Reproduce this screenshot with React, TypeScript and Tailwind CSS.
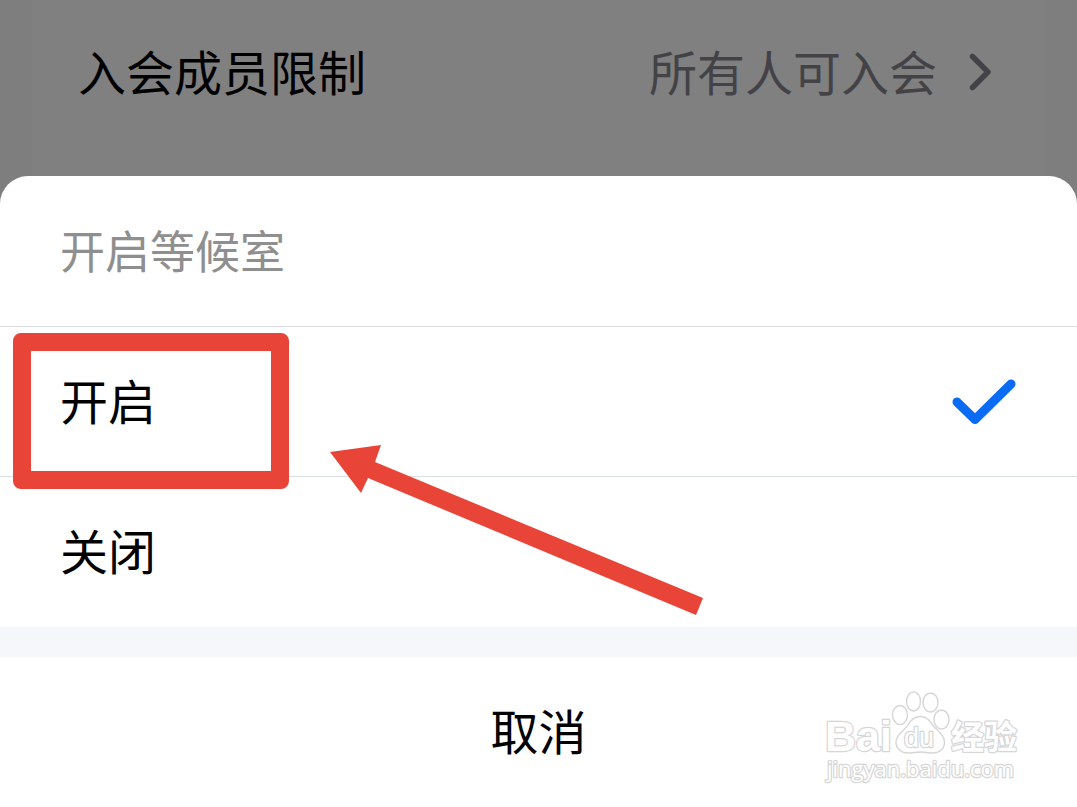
import { useState } from "react";

const OPTIONS = [
  { value: "on", label: "开启" },
  { value: "off", label: "关闭" },
];

function ChevronIcon() {
  return (
    <svg viewBox="0 0 24 38" className="h-[38px] w-6 flex-shrink-0" fill="none" aria-hidden="true">
      <path d="M3.5 3.5 19 19 3.5 34.500" stroke="#434347" strokeWidth="5.500" strokeLinecap="round" strokeLinejoin="round" />
    </svg>
  );
}

function CheckIcon() {
  return (
    <svg viewBox="0 0 66 48" className="h-12 w-[66px] flex-shrink-0 invisible peer-checked:visible" fill="none" aria-hidden="true">
      <path d="M6 24 24 41.500 60 6" stroke="#0a6cf5" strokeWidth="9" strokeLinecap="round" strokeLinejoin="round" />
    </svg>
  );
}

function Watermark() {
  return (
    <svg
      viewBox="0 0 205 100"
      className="pointer-events-none absolute right-[52px] bottom-[17px] h-[100px] w-[205px]"
      fill="#ffffff"
      stroke="#d6d6d6"
      strokeWidth="1.4"
      strokeLinejoin="round"
      role="img"
      aria-label="Baidu 经验"
    >
      <text x="5" y="61" fontSize="43" fontWeight="700" strokeWidth="2.500" paintOrder="stroke" className="font-['Liberation_Sans',sans-serif]">Bai</text>
      <ellipse cx="80" cy="25" rx="7.500" ry="9.500" />
      <ellipse cx="93.500" cy="11.500" rx="7" ry="9.500" />
      <ellipse cx="110.500" cy="12.500" rx="7.500" ry="9.500" />
      <ellipse cx="121.500" cy="29.500" rx="7.500" ry="9.500" />
      <path d="M100.500 26.500c-7 0-10.500 4.500-13 9-3 5-11.500 8.500-11.500 16.500 0 7.500 6 11 12.500 11 5 0 7.500-1 12-1s7 1 12 1c6.500 0 12-3.500 12-11 0-8-8-11.500-11.500-16.500-3-4.500-6-9-12.500-9z" />
      <text x="84" y="57" fontSize="27" strokeWidth="2.500" paintOrder="stroke" className="font-['Liberation_Sans',sans-serif]">du</text>
      <text x="131" y="59" fontSize="33" fontWeight="700" strokeWidth="2.500" paintOrder="stroke" className="font-['Noto_Sans_CJK_SC',sans-serif]">经验</text>
      <text x="7" y="87" fontSize="22" fontWeight="500" strokeWidth="2.500" paintOrder="stroke" className="font-['Open_Sans',sans-serif]">jingyan.baidu.com</text>
    </svg>
  );
}

// Red frame and arrow that point at the option to tap
function Callout() {
  return (
    <>
      <div className="pointer-events-none absolute top-1.5 left-[13px] z-10 h-[156px] w-[276px] rounded-lg border-[18px] border-[#e84538]" />
      <svg
        viewBox="0 0 376 172"
        className="pointer-events-none absolute top-[117px] left-[329px] z-10 h-[172px] w-[376px]"
        aria-hidden="true"
      >
        <path d="M1 8 52 1 46 18 374 154 367 171 39 34 32 49z" fill="#e84538" />
      </svg>
    </>
  );
}

export default function App() {
  const [value, setValue] = useState("on");

  return (
    <div className="flex min-h-screen flex-col bg-[#7e7e7e] font-['Noto_Sans_CJK_SC',sans-serif] text-5xl text-black">
      {/* Dimmed settings page */}
      <div className="mx-8 flex h-44 items-center justify-between bg-[#808080] pr-[52px] pb-8 pl-[46px]">
        <span className="pb-1">入会成员限制</span>
        <div className="flex items-center gap-8 text-[#434347]">
          <span className="pb-1">所有人可入会</span>
          <ChevronIcon />
        </div>
      </div>

      {/* Bottom sheet */}
      <section role="dialog" aria-labelledby="sheet-title" className="flex flex-1 flex-col overflow-hidden rounded-t-[28px] bg-white">
        <h2 id="sheet-title" className="flex h-[150px] items-center px-[60px] pb-1 text-[45px] text-[#8f8f8f]">
          开启等候室
        </h2>

        <div role="radiogroup" aria-labelledby="sheet-title" className="pb-px">
          {OPTIONS.map((opt) => (
            <div key={opt.value} className="relative border-t border-[#dcdfe1]">
              <label className="flex h-[149px] cursor-pointer items-center px-[60px]">
                <span className="flex-1 pb-1.5">{opt.label}</span>
                <input
                  type="radio"
                  name="waiting-room"
                  value={opt.value}
                  checked={value === opt.value}
                  onChange={() => setValue(opt.value)}
                  className="peer sr-only"
                />
                <CheckIcon />
              </label>
              {opt.value === "on" && <Callout />}
            </div>
          ))}
        </div>

        <div className="h-[30px] bg-[#f6f7fb]" />

        <div className="relative flex flex-1">
          <button type="button" className="min-h-[150px] w-full cursor-pointer pb-1.5">
            取消
          </button>
          <Watermark />
        </div>
      </section>
    </div>
  );
}
